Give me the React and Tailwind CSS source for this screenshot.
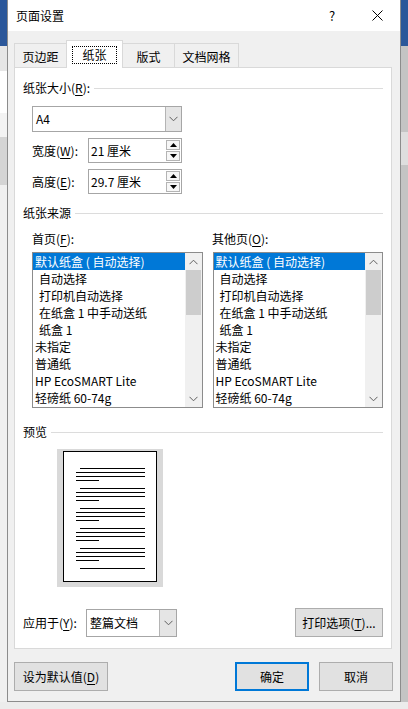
import React from "react";

function U({ children }) {
  return <span className="underline decoration-1 underline-offset-[2px]">{children}</span>;
}

function ChevronDown() {
  return (
    <svg width="9" height="6" viewBox="0 0 9 6" className="block">
      <path d="M0.5 0.8 L4.5 4.8 L8.5 0.8" fill="none" stroke="#606060" strokeWidth="1" />
    </svg>
  );
}

function ChevronUp() {
  return (
    <svg width="9" height="6" viewBox="0 0 9 6" className="block">
      <path d="M0.5 5.2 L4.5 1.2 L8.5 5.2" fill="none" stroke="#606060" strokeWidth="1" />
    </svg>
  );
}

function GroupHeader({ children }) {
  return (
    <div className="flex h-[16px] items-center">
      <span className="whitespace-nowrap text-[12px] leading-[16px]">{children}</span>
      <div className="ml-[4px] h-px flex-1 bg-[#dcdcdc]" />
    </div>
  );
}

function SpinBox({ value }) {
  return (
    <div className="flex h-[25px] w-[94px] border border-[#a6a6a6] bg-white">
      <span className="flex-1 pl-[2px] text-[12px] leading-[23px]">{value}</span>
      <div className="flex w-[15px] flex-col py-px pr-px">
        <div className="flex flex-1 items-center justify-center border border-[#b4b4b4] bg-[#f7f7f7]">
          <svg width="7" height="4" viewBox="0 0 7 4" className="block">
            <path d="M0 4 L3.5 0 L7 4 Z" fill="#000" />
          </svg>
        </div>
        <div className="mt-px flex flex-1 items-center justify-center border border-[#b4b4b4] bg-[#f7f7f7]">
          <svg width="7" height="4" viewBox="0 0 7 4" className="block">
            <path d="M0 0 L3.5 4 L7 0 Z" fill="#000" />
          </svg>
        </div>
      </div>
    </div>
  );
}

const trayItems = [
  { text: "默认纸盒 ( 自动选择)", indent: false, selected: true },
  { text: "自动选择", indent: true },
  { text: "打印机自动选择", indent: true },
  { text: "在纸盒 1 中手动送纸", indent: true },
  { text: "纸盒 1", indent: true },
  { text: "未指定", indent: false },
  { text: "普通纸", indent: false },
  { text: "HP EcoSMART Lite", indent: false },
  { text: "轻磅纸 60-74g", indent: false },
];

function TrayList() {
  return (
    <div className="flex h-[156px] w-[171px] border border-[#8c8c8c] bg-white">
      <div className="flex min-w-0 flex-1 flex-col overflow-hidden">
        {trayItems.map((it, i) => (
          <div
            key={i}
            className={
              (it.selected ? "bg-[#0078d7] text-white " : "text-black ") +
              (it.indent ? "pl-[6px] " : "pl-[2px] ") +
              "h-[17px] whitespace-nowrap text-[12px] leading-[17px]"
            }
          >
            {it.text}
          </div>
        ))}
      </div>
      <div className="flex w-[17px] flex-col bg-[#f0f0f0]">
        <div className="flex h-[17px] items-center justify-center">
          <ChevronUp />
        </div>
        <div className="flex flex-1 flex-col px-px">
          <div className="h-[45px] bg-[#cdcdcd]" />
        </div>
        <div className="flex h-[17px] items-center justify-center">
          <ChevronDown />
        </div>
      </div>
    </div>
  );
}

function PagePreview() {
  const groups = [19, 39, 59, 79, 99];
  return (
    <svg width="106" height="138" viewBox="0 0 106 138" className="block">
      <rect x="0" y="0" width="106" height="138" fill="#d9d9d9" />
      <rect x="6.5" y="2.5" width="93" height="130" fill="#fff" stroke="#000" strokeWidth="1" />
      {groups.map((y) => (
        <g key={y} stroke="#000" strokeWidth="1">
          <line x1="23" y1={y + 0.5} x2="88" y2={y + 0.5} />
          <line x1="19" y1={y + 4.5} x2="88" y2={y + 4.5} />
          <line x1="19" y1={y + 8.5} x2="88" y2={y + 8.5} />
          <line x1="19" y1={y + 12.5} x2="42" y2={y + 12.5} />
        </g>
      ))}
      <line x1="23" y1="119.5" x2="88" y2="119.5" stroke="#000" strokeWidth="1" />
    </svg>
  );
}

export default function App() {
  return (
    <div className="flex h-[709px] w-[408px] flex-col overflow-hidden bg-[#ececec] font-['Noto_Sans_CJK_SC',sans-serif] text-black">
      <div className="flex h-[702px]">
        {/* word window behind, left edge */}
        <div className="flex w-[7px] flex-col">
          <div className="h-[46px] bg-[#2b579a]" />
          <div className="h-[25px] bg-[#e6e6e6]" />
          <div className="h-[42px] bg-white" />
          <div className="h-[24px] bg-[#f3f3f3]" />
          <div className="h-[48px] bg-[#d4d4d4]" />
          <div className="flex-1 bg-[#f0f0f0]" />
        </div>

        {/* dialog */}
        <div className="flex w-[394px] flex-col border-x border-b border-[#8c8c8c] bg-[#f0f0f0]">
          <div className="flex h-[31px] items-center bg-white">
            <span className="ml-[8px] flex-1 text-[12px] leading-[16px]">页面设置</span>
            <div className="flex h-full w-[46px] items-center justify-center text-[13px] leading-[16px]">?</div>
            <div className="flex h-full w-[45px] items-center justify-center">
              <svg width="11" height="11" viewBox="0 0 11 11" className="block">
                <path d="M0.5 0.5 L10.5 10.5 M10.5 0.5 L0.5 10.5" stroke="#000" strokeWidth="1" />
              </svg>
            </div>
          </div>

          <div className="ml-[6px] mt-[9px] flex h-[27px] items-end text-[12px]">
            <div className="flex h-[24px] w-[53px] items-center justify-center border border-b-0 border-[#d9d9d9] bg-[#f0f0f0] pt-[2px] leading-[16px]">
              页边距
            </div>
            <div className="relative z-10 -mb-px -ml-px flex h-[28px] w-[57px] items-center justify-center border border-b-0 border-[#d9d9d9] bg-white">
              <span className="border border-dotted border-black px-[9px] leading-[16px]">纸张</span>
            </div>
            <div className="-ml-px flex h-[24px] w-[53px] items-center justify-center border border-b-0 border-[#d9d9d9] bg-[#f0f0f0] pt-[2px] leading-[16px]">
              版式
            </div>
            <div className="-ml-px flex h-[24px] w-[65px] items-center justify-center border border-b-0 border-[#d9d9d9] bg-[#f0f0f0] pt-[2px] leading-[16px]">
              文档网格
            </div>
          </div>

          <div className="ml-[6px] flex h-[582px] w-[378px] flex-col border border-[#d9d9d9] bg-white px-[8px] text-[12px]">
            <div className="mt-[12px]">
              <GroupHeader>
                纸张大小(<U>R</U>):
              </GroupHeader>
            </div>

            <div className="ml-[9px] mt-[10px] flex h-[26px] w-[150px] border border-[#a6a6a6] bg-white">
              <span className="flex-1 pl-[3px] leading-[24px]">A4</span>
              <div className="flex w-[16px] items-center justify-center border-l border-[#b4b4b4] bg-[#e5e5e5]">
                <ChevronDown />
              </div>
            </div>

            <div className="ml-[9px] mt-[6px] flex h-[25px] items-center">
              <span className="w-[56px] leading-[16px]">
                宽度(<U>W</U>):
              </span>
              <SpinBox value="21 厘米" />
            </div>
            <div className="ml-[9px] mt-[6px] flex h-[25px] items-center">
              <span className="w-[56px] leading-[16px]">
                高度(<U>E</U>):
              </span>
              <SpinBox value="29.7 厘米" />
            </div>

            <div className="mt-[11px]">
              <GroupHeader>纸张来源</GroupHeader>
            </div>

            <div className="ml-[9px] mt-[10px] flex h-[16px] items-center leading-[16px]">
              <span className="w-[180px]">
                首页(<U>F</U>):
              </span>
              <span>
                其他页(<U>O</U>):
              </span>
            </div>

            <div className="ml-[9px] mt-[5px] flex gap-[10px]">
              <TrayList />
              <TrayList />
            </div>

            <div className="mt-[16px]">
              <GroupHeader>预览</GroupHeader>
            </div>

            <div className="ml-[34px] mt-[9px]">
              <PagePreview />
            </div>

            <div className="mt-[21px] flex h-[29px] items-center justify-between">
              <div className="flex items-center">
                <span className="w-[63px] leading-[16px]">
                  应用于(<U>Y</U>):
                </span>
                <div className="flex h-[28px] w-[91px] border border-[#a6a6a6] bg-white">
                  <span className="flex-1 pl-[3px] leading-[26px]">整篇文档</span>
                  <div className="flex w-[17px] items-center justify-center border-l border-[#b4b4b4] bg-[#e5e5e5]">
                    <ChevronDown />
                  </div>
                </div>
              </div>
              <div className="flex h-[29px] w-[88px] items-center justify-center border border-[#adadad] bg-[#e1e1e1] leading-[16px]">
                打印选项(<U>T</U>)...
              </div>
            </div>
          </div>

          <div className="ml-[6px] mr-[7px] mt-[13px] flex h-[29px] text-[12px] leading-[16px]">
            <div className="flex w-[94px] items-center justify-center border border-[#adadad] bg-[#e1e1e1]">
              设为默认值(<U>D</U>)
            </div>
            <div className="flex-1" />
            <div className="flex w-[74px] items-center justify-center border-2 border-[#0078d7] bg-[#e1e1e1]">
              确定
            </div>
            <div className="ml-[10px] flex w-[74px] items-center justify-center border border-[#adadad] bg-[#e1e1e1]">
              取消
            </div>
          </div>
        </div>

        {/* word window behind, right edge */}
        <div className="flex w-[7px] flex-col">
          <div className="h-[46px] bg-[#2b579a]" />
          <div className="h-[86px] bg-[#c4c4c4]" />
          <div className="h-[33px] bg-[#dedede]" />
          <div className="flex-1 bg-[#c4c4c4]" />
        </div>
      </div>
      <div className="h-[7px] bg-[#ececec]" />
    </div>
  );
}
